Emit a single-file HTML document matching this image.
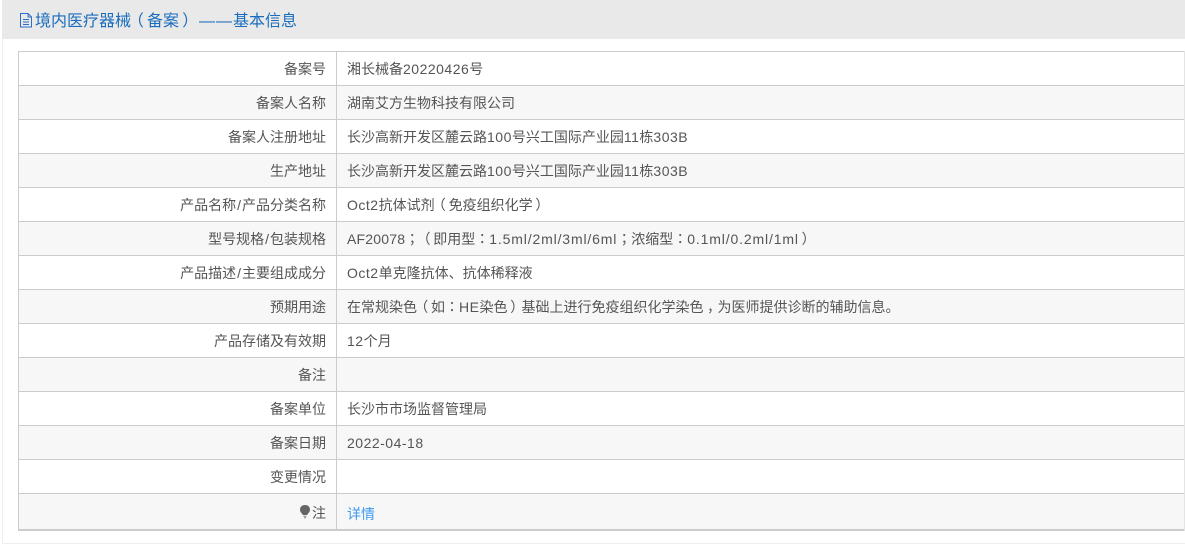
<!DOCTYPE html>
<html lang="zh-CN">
<head>
<meta charset="utf-8">
<title>境内医疗器械（备案）</title>
<style>
html,body{margin:0;padding:0;background:#fff;}
body{width:1185px;height:556px;overflow:hidden;position:relative;font-family:"Liberation Sans","Noto Sans CJK SC",sans-serif;font-size:14px;color:#555;}
.frame{position:absolute;left:2px;top:0;width:1183px;height:544px;box-sizing:border-box;border-left:1px solid #eee;border-bottom:1px solid #eee;}
.head{position:absolute;left:2px;top:0;width:1183px;height:39px;background:#e9e9e9;}
.title{position:absolute;left:35px;top:9px;font-size:16px;line-height:20px;color:#1a6dbd;white-space:nowrap;}
.ico{position:absolute;left:19px;top:13px;}
.tb{position:absolute;left:18px;top:51px;width:1167px;height:480px;box-sizing:border-box;border-left:1px solid #ccc;border-top:1px solid #ccc;}
.r{position:absolute;left:0;width:1166px;height:33px;border-bottom:1px solid #ccc;}
.r.g{background:#f7f7f7;}
.l{position:absolute;left:0;top:0;width:307px;height:100%;padding-right:10px;line-height:35px;text-align:right;border-right:1px solid #ccc;white-space:nowrap;}
.v{position:absolute;left:328px;top:0;line-height:35px;white-space:nowrap;}
.end{position:absolute;right:0;top:51px;width:1px;height:480px;background:#e4e4e4;}
a{color:#3f9bf0;text-decoration:none;}
.n{letter-spacing:.5px;}
.m{letter-spacing:.85px;}
.a{letter-spacing:.2px;}
.s{margin:0 1px;}
.p{display:inline-block;width:1em;text-align:center;font-family:"Noto Sans CJK TC","Liberation Sans",sans-serif;position:relative;}
.pl{left:-.2em;}
.pr{left:.2em;}
.pc{left:.25em;font-family:"Noto Sans CJK SC",sans-serif;}
.d{letter-spacing:1px;margin-left:4px;}
</style>
</head>
<body>
<div class="frame"></div>
<div class="head"></div>
<svg class="ico" width="14" height="15" viewBox="0 0 14 15" fill="none" stroke="#2f6cc8" stroke-width="1"><path d="M1.500 .5H9L12.500 4V14H1.500Z"/><path d="M9 .5V4H12.500M4 6.500H10M4 9H10M4 11.500H10"/></svg>
<div class="title">境内医疗器械<span class="p pl">（</span>备案<span class="p pr">）</span><span class="d">——</span>基本信息</div>
<div class="tb">
<div class="r" style="top:0"><div class="l">备案号</div><div class="v">湘长械备<span class="n">20220426</span>号</div></div>
<div class="r g" style="top:34px"><div class="l">备案人名称</div><div class="v">湖南艾方生物科技有限公司</div></div>
<div class="r" style="top:68px"><div class="l">备案人注册地址</div><div class="v">长沙高新开发区麓云路<span class="n">100</span>号兴工国际产业园<span class="n">11</span>栋<span class="n">303B</span></div></div>
<div class="r g" style="top:102px"><div class="l">生产地址</div><div class="v">长沙高新开发区麓云路<span class="n">100</span>号兴工国际产业园<span class="n">11</span>栋<span class="n">303B</span></div></div>
<div class="r" style="top:136px"><div class="l">产品名称<span class="s">/</span>产品分类名称</div><div class="v"><span class="n">Oct2</span>抗体试剂<span class="p pl">（</span>免疫组织化学<span class="p pr">）</span></div></div>
<div class="r g" style="top:170px"><div class="l">型号规格<span class="s">/</span>包装规格</div><div class="v"><span class="a">AF20078</span><span class="p">；</span><span class="p pl">（</span>即用型<span class="p">：</span><span class="m">1.5ml/2ml/3ml/6ml</span><span class="p">；</span>浓缩型<span class="p">：</span><span class="m">0.1ml/0.2ml/1ml</span><span class="p pr">）</span></div></div>
<div class="r" style="top:204px"><div class="l">产品描述<span class="s">/</span>主要组成成分</div><div class="v"><span class="n">Oct2</span>单克隆抗体、抗体稀释液</div></div>
<div class="r g" style="top:238px"><div class="l">预期用途</div><div class="v">在常规染色<span class="p pl">（</span>如<span class="p">：</span><span class="n">HE</span>染色<span class="p pr">）</span>基础上进行免疫组织化学染色<span class="p pc">，</span>为医师提供诊断的辅助信息。</div></div>
<div class="r" style="top:272px"><div class="l">产品存储及有效期</div><div class="v"><span class="n">12</span>个月</div></div>
<div class="r g" style="top:306px"><div class="l">备注</div><div class="v"></div></div>
<div class="r" style="top:340px"><div class="l">备案单位</div><div class="v">长沙市市场监督管理局</div></div>
<div class="r g" style="top:374px"><div class="l">备案日期</div><div class="v"><span class="n">2022-04-18</span></div></div>
<div class="r" style="top:408px"><div class="l">变更情况</div><div class="v"></div></div>
<div class="r g" style="top:442px;height:35px;border-bottom:2px solid #ccc;"><div class="l" style="line-height:38px;">注</div><div class="v" style="line-height:40px;"><a href="#">详情</a></div>
<svg style="position:absolute;left:280px;top:10px" width="12" height="15" viewBox="0 0 12 15"><path d="M6 1C3 1 1 3 1 5.600 1 8 3 9.500 4 11H8C9 9.500 11 8 11 5.600 11 3 9 1 6 1Z" fill="#666"/><path d="M4.500 12.300H7.500M5 13.800H7" stroke="#888" stroke-width="1"/></svg>
</div>
</div>
<div class="end"></div>
</body>
</html>
